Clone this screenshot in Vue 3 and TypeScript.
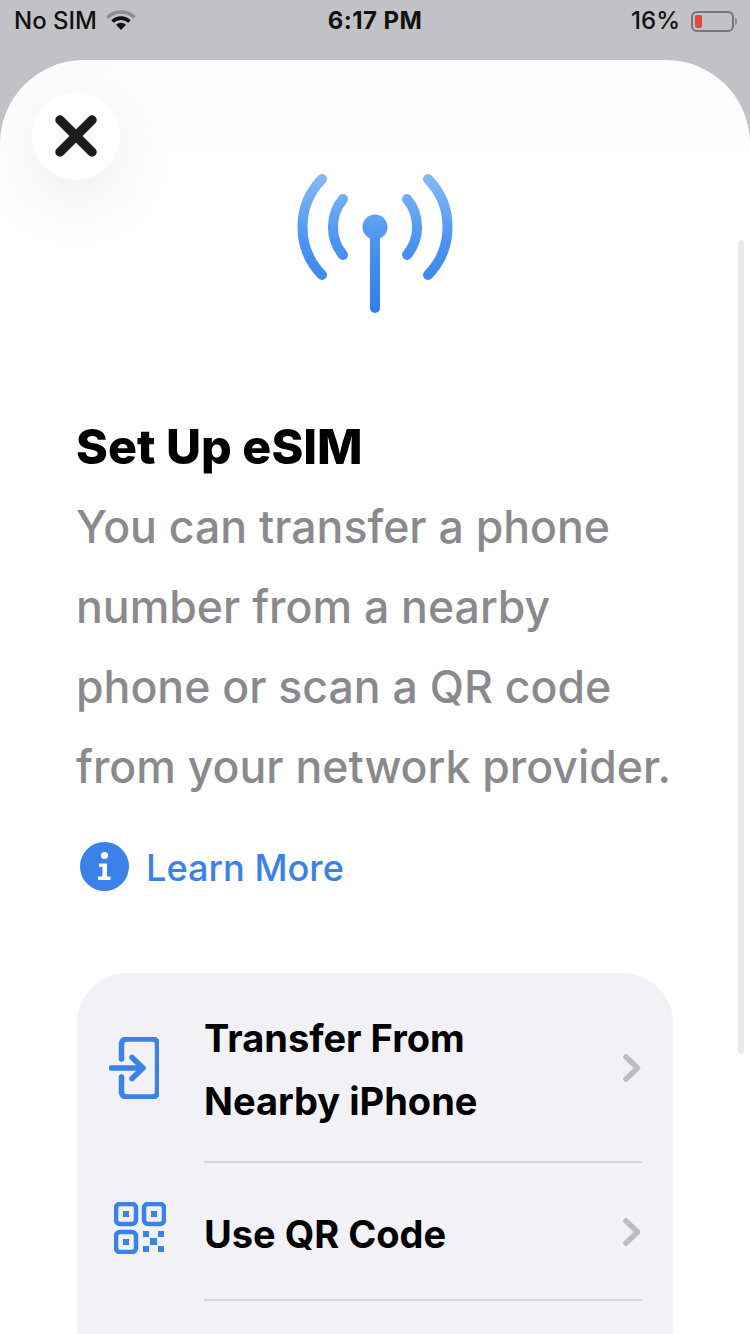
<script setup lang="ts">
interface Row {
  lines: string[]
  icon: "transfer" | "qr" | ""
}

const rows: Row[] = [
  { lines: ["Transfer From", "Nearby iPhone"], icon: "transfer" },
  { lines: ["Use QR Code"], icon: "qr" },
]

const bodyLines = [
  "You can transfer a phone",
  "number from a nearby",
  "phone or scan a QR code",
  "from your network provider.",
]
</script>

<template>
  <div class="screen">
    <div class="status-bar">
      <div class="status-left">
        <span>No SIM</span>
        <svg class="wifi" width="30" height="22" viewBox="0 0 30 22">
          <path d="M1.500 8.500a19.500 19.500 0 0 1 27 0" fill="none" stroke="#8e8e92" stroke-width="3.600" />
          <path d="M6.500 12.500a12.500 12.500 0 0 1 17 0" fill="none" stroke="#111" stroke-width="3.600" />
          <path d="M15 21l-5-5.200a7 7 0 0 1 10 0z" fill="#111" />
        </svg>
      </div>
      <div class="status-time">6:17 PM</div>
      <div class="status-right">
        <span>16%</span>
        <div class="battery">
          <div class="battery-level"></div>
        </div>
        <div class="battery-tip"></div>
      </div>
    </div>

    <div class="sheet">
      <button class="close-btn">
        <svg width="42" height="42" viewBox="0 0 42 42">
          <path d="M5 5l32 32M37 5L5 37" stroke="#1c1c1e" stroke-width="9.500" stroke-linecap="round" fill="none" />
        </svg>
      </button>
      <div class="scrollbar"></div>

      <div class="hero">
        <svg width="160" height="144" viewBox="0 0 160 144">
          <defs>
            <linearGradient id="antenna" gradientUnits="userSpaceOnUse" x1="0" y1="0" x2="0" y2="144">
              <stop offset="0" stop-color="#85bbf7" />
              <stop offset="0.5" stop-color="#4a93f0" />
              <stop offset="1" stop-color="#2f7eee" />
            </linearGradient>
          </defs>
          <g fill="none" stroke="url(#antenna)" stroke-linecap="round">
            <g stroke-width="10">
              <path d="M133 7A68.800 68.800 0 0 1 133 103" />
              <path d="M27 7A68.800 68.800 0 0 0 27 103" />
              <path d="M112 27A44 44 0 0 1 112 83" />
              <path d="M48 27A44 44 0 0 0 48 83" />
            </g>
            <path d="M80 55V136" stroke-width="10" />
          </g>
          <circle cx="80" cy="55" r="12.500" fill="url(#antenna)" />
        </svg>
      </div>

      <div class="content">
        <h1 class="title">Set Up eSIM</h1>
        <p class="body-text">
          <span v-for="line in bodyLines" :key="line" class="body-line">{{ line }}</span>
        </p>

        <div class="learn-more">
          <svg width="49" height="49" viewBox="0 0 49 49">
            <circle cx="24.500" cy="24.500" r="24.500" fill="#3b82e8" />
            <circle cx="24.500" cy="13.500" r="3.600" fill="#fff" />
            <path d="M19 21.500h8v13h3.500v3.500h-12.500v-3.500h4.500v-9.500h-3.500z" fill="#fff" />
          </svg>
          <span>Learn More</span>
        </div>

        <div class="card">
          <div v-for="row in rows" :key="row.icon" class="row" :class="`row-${row.icon}`">
            <div class="row-icon">
              <svg v-if="row.icon === 'transfer'" width="50" height="62" viewBox="0 0 50 62">
                <path d="M12.500 22V7a5 5 0 0 1 5-5h26a5 5 0 0 1 5 5v48a5 5 0 0 1-5 5h-26a5 5 0 0 1-5-5V40" fill="none" stroke="#3b82e8" stroke-width="5.500" stroke-linecap="round" />
                <path d="M2.500 31H33M23 20.500L34 31 23 41.500" fill="none" stroke="#3b82e8" stroke-width="5.500" stroke-linecap="round" stroke-linejoin="round" />
              </svg>
              <svg v-else width="52" height="52" viewBox="0 0 52 52">
                <g fill="none" stroke="#3b82e8" stroke-width="4.500">
                  <rect x="2" y="2" width="20" height="20" rx="4" />
                  <rect x="30" y="2" width="20" height="20" rx="4" />
                  <rect x="2" y="30" width="20" height="20" rx="4" />
                </g>
                <g fill="#3b82e8">
                  <rect x="9" y="9" width="6" height="6" />
                  <rect x="37" y="9" width="6" height="6" />
                  <rect x="9" y="37" width="6" height="6" />
                  <rect x="29" y="29" width="6" height="6" />
                  <rect x="44" y="29" width="6" height="6" />
                  <rect x="36" y="36" width="7" height="7" />
                  <rect x="29" y="44" width="6" height="6" />
                  <rect x="44" y="44" width="6" height="6" />
                </g>
              </svg>
            </div>
            <div class="row-body">
              <div class="row-text">
                <div v-for="line in row.lines" :key="line">{{ line }}</div>
              </div>
              <svg class="chevron" width="18" height="28" viewBox="0 0 18 28">
                <path d="M3 3l11.500 11L3 25" fill="none" stroke="#bcbcc2" stroke-width="5.500" stroke-linecap="round" stroke-linejoin="round" />
              </svg>
            </div>
          </div>
          <div class="row row-empty"></div>
        </div>
      </div>
    </div>
  </div>
</template>

<style>
html,
body {
  margin: 0;
  background: #fff;
}
</style>

<style scoped>
.screen {
  width: 750px;
  height: 1334px;
  overflow: hidden;
  background: #c1c1c6;
  font-family: Inter, "Liberation Sans", sans-serif;
  color: #000;
}

.status-bar {
  height: 60px;
  display: flex;
  align-items: flex-start;
  justify-content: space-between;
  position: relative;
  padding: 6px 13px 0 14px;
  box-sizing: border-box;
  font-size: 24px;
  line-height: 30px;
  font-weight: 500;
  color: #111;
}

.status-left {
  display: flex;
  align-items: center;
  gap: 9px;
}

.wifi {
  margin-top: -2px;
}

.status-time {
  position: absolute;
  left: 0;
  right: 0;
  text-align: center;
  font-weight: 700;
  letter-spacing: 0.4px;
}

.status-right {
  display: flex;
  align-items: center;
}

.battery {
  width: 43px;
  height: 21px;
  margin-left: 11px;
  box-sizing: border-box;
  border: 2px solid #77777b;
  border-radius: 6px;
  padding: 2px;
}

.battery-level {
  width: 7px;
  height: 100%;
  border-radius: 2px;
  background: #e5453f;
}

.battery-tip {
  width: 2px;
  height: 7px;
  margin-left: 1px;
  border-radius: 0 2px 2px 0;
  background: #8a8a8e;
}

.sheet {
  position: relative;
  height: 1274px;
  border-radius: 84px 84px 0 0;
  background: linear-gradient(#fcfcfc 0, #fff 110px);
  overflow: hidden;
}

.close-btn {
  position: absolute;
  left: 32px;
  top: 32px;
  width: 88px;
  height: 88px;
  padding: 0;
  border: none;
  border-radius: 50%;
  background: #fff;
  display: flex;
  align-items: center;
  justify-content: center;
  box-shadow: 0 20px 70px rgba(0, 0, 0, 0.09);
}

.scrollbar {
  position: absolute;
  left: 738px;
  top: 180px;
  width: 6px;
  height: 814px;
  border-radius: 3px;
  background: #e9e9ea;
}

.hero {
  display: flex;
  justify-content: center;
  padding-top: 112px;
  height: 144px;
  margin-bottom: 91px;
}

.hero svg {
  display: block;
}

.content {
  padding: 0 77px;
}

.title {
  margin: 0;
  font-size: 48.3px;
  line-height: 80px;
  font-weight: 800;
  color: #000;
  margin-left: -1px;
}

.body-text {
  margin: 0;
  font-size: 44.6px;
  line-height: 80px;
  font-weight: 500;
  color: #8a8a8e;
  white-space: nowrap;
  margin-left: -1px;
}

.body-line {
  display: block;
}

.learn-more {
  display: flex;
  align-items: center;
  gap: 17px;
  margin: 35px 0 82px 3px;
  height: 49px;
  font-size: 36.2px;
  font-weight: 500;
  color: #3b82e8;
}

.learn-more span {
  padding-top: 2px;
}

.card {
  width: 596px;
  border-radius: 50px 50px 0 0;
  background: #f1f1f6;
}

.row {
  display: flex;
}

.row-icon {
  width: 127px;
  display: flex;
  justify-content: center;
  align-items: center;
  flex: none;
}

.row-transfer .row-icon svg {
  margin-left: -14px;
}

.row-qr .row-icon svg {
  margin: -9px 0 0 -1px;
}

.row-body {
  flex: 1;
  margin-right: 31px;
  display: flex;
  align-items: center;
  justify-content: space-between;
  border-bottom: 2px solid #d6d6da;
  padding-right: 1px;
}

.row-transfer .row-body {
  height: 188px;
}

.row-qr .row-body {
  height: 136px;
}

.row-text {
  font-size: 38px;
  line-height: 63px;
  font-weight: 700;
  padding-top: 6px;
}

.chevron {
  margin-top: 2px;
}

.row-empty {
  height: 80px;
}
</style>
